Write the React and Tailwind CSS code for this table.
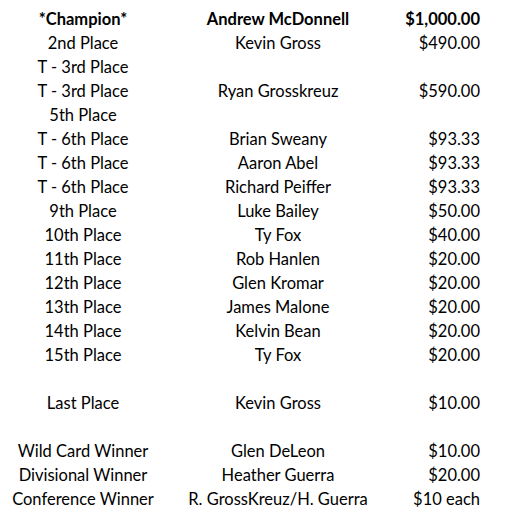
import React from 'react';

const rows = [
  { place: '*Champion*', name: 'Andrew McDonnell', prize: '$1,000.00', bold: true },
  { place: '2nd Place', name: 'Kevin Gross', prize: '$490.00' },
  { place: 'T - 3rd Place', name: '', prize: '' },
  { place: 'T - 3rd Place', name: 'Ryan Grosskreuz', prize: '$590.00' },
  { place: '5th Place', name: '', prize: '' },
  { place: 'T - 6th Place', name: 'Brian Sweany', prize: '$93.33' },
  { place: 'T - 6th Place', name: 'Aaron Abel', prize: '$93.33' },
  { place: 'T - 6th Place', name: 'Richard Peiffer', prize: '$93.33' },
  { place: '9th Place', name: 'Luke Bailey', prize: '$50.00' },
  { place: '10th Place', name: 'Ty Fox', prize: '$40.00' },
  { place: '11th Place', name: 'Rob Hanlen', prize: '$20.00' },
  { place: '12th Place', name: 'Glen Kromar', prize: '$20.00' },
  { place: '13th Place', name: 'James Malone', prize: '$20.00' },
  { place: '14th Place', name: 'Kelvin Bean', prize: '$20.00' },
  { place: '15th Place', name: 'Ty Fox', prize: '$20.00' },
  { place: '', name: '', prize: '' },
  { place: 'Last Place', name: 'Kevin Gross', prize: '$10.00' },
  { place: '', name: '', prize: '' },
  { place: 'Wild Card Winner', name: 'Glen DeLeon', prize: '$10.00' },
  { place: 'Divisional Winner', name: 'Heather Guerra', prize: '$20.00' },
  { place: 'Conference Winner', name: 'R. GrossKreuz/H. Guerra', prize: '$10 each' },
];

export default function App() {
  return (
    <div className="w-[531px] h-[524px] bg-white pt-[7px] text-black text-[16.5px] font-['Lato',sans-serif]">
      {rows.map((r, i) => (
        <div key={i} className={`grid grid-cols-[166px_224px_90px] h-[24px] items-center leading-none ${r.bold ? 'font-bold' : ''}`}>
          <div className="text-center whitespace-nowrap">{r.place}</div>
          <div className="text-center whitespace-nowrap">{r.name}</div>
          <div className="text-right whitespace-nowrap">{r.prize}</div>
        </div>
      ))}
    </div>
  );
}
